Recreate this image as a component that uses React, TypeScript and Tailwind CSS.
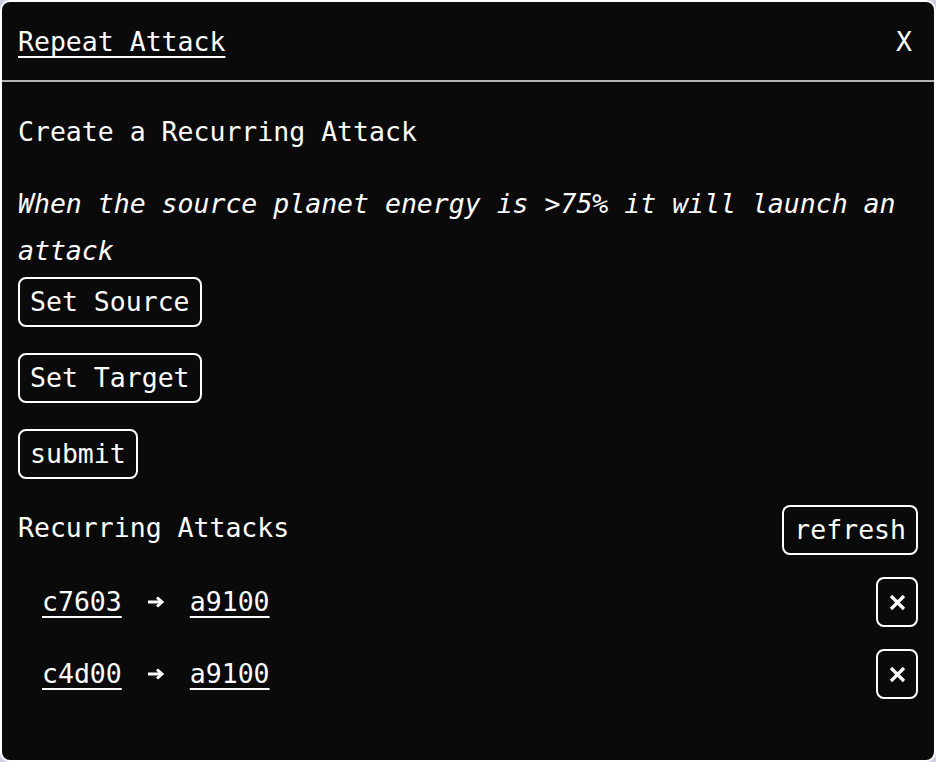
import React from "react";

const mono = { fontFamily: '"DejaVu Sans Mono", "Liberation Mono", monospace' };

function Arrow() {
  return (
    <svg width="18" height="12" viewBox="0 0 18 12" className="shrink-0">
      <path d="M1 6h13" stroke="white" strokeWidth="3" />
      <path d="M10 1.5l5 4.5-5 4.5" stroke="white" strokeWidth="3" fill="none" />
    </svg>
  );
}

function DeleteButton() {
  return (
    <button className="w-[42px] h-[50px] border-2 border-white rounded-lg flex items-center justify-center">
      <svg width="17" height="17" viewBox="0 0 17 17">
        <path d="M2 2l13 13M15 2L2 15" stroke="white" strokeWidth="3.2" />
      </svg>
    </button>
  );
}

const attacks = [
  { source: "c7603", target: "a9100" },
  { source: "c4d00", target: "a9100" },
];

export default function App() {
  return (
    <div className="w-[936px] h-[762px] bg-[#cfd0e6] text-white text-[26.5px]" style={mono}>
      <div className="w-full h-full bg-[#0a0a0a] border-2 border-white rounded-[10px] flex flex-col overflow-hidden">
        {/* Header */}
        <div className="h-[80px] shrink-0 flex items-center justify-between pl-4 pr-[22px] pt-[2px] border-b-2 border-[#b4b4b4]">
          <span className="underline decoration-2 underline-offset-[5px]">Repeat Attack</span>
          <button>X</button>
        </div>

        {/* Body */}
        <div className="px-4 pt-[26px] flex flex-col">
          <h2 className="leading-[48px]">Create a Recurring Attack</h2>
          <p className="italic leading-[47px] mt-[24px]">
            When the source planet energy is &gt;75% it will launch an attack
          </p>

          <div className="flex flex-col items-start gap-[26px] mt-[3px]">
            <button className="h-[50px] px-[10px] border-2 border-white rounded-lg leading-none">Set Source</button>
            <button className="h-[50px] px-[10px] border-2 border-white rounded-lg leading-none">Set Target</button>
            <button className="h-[50px] px-[10px] border-2 border-white rounded-lg leading-none">submit</button>
          </div>

          <div className="flex items-center justify-between mt-[26px]">
            <span className="leading-none -mt-[4px]">Recurring Attacks</span>
            <button className="h-[50px] px-[10px] border-2 border-white rounded-lg leading-none">refresh</button>
          </div>

          <div className="flex flex-col gap-[22px] mt-[22px]">
            {attacks.map((a, i) => (
              <div key={i} className="flex items-center justify-between">
                <div className="flex items-center gap-[25px] pl-6 leading-none">
                  <span className="underline decoration-2 underline-offset-[5px]">{a.source}</span>
                  <Arrow />
                  <span className="underline decoration-2 underline-offset-[5px]">{a.target}</span>
                </div>
                <DeleteButton />
              </div>
            ))}
          </div>
        </div>
      </div>
    </div>
  );
}
